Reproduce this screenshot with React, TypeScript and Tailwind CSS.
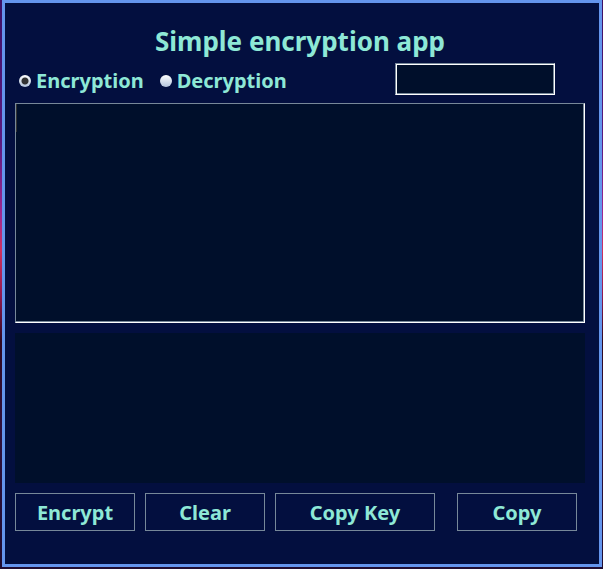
import { useState } from "react";

type Mode = "encrypt" | "decrypt";

const radioClass =
  "h-3 w-3 shrink-0 appearance-none rounded-full bg-linear-to-b from-white to-[#b4c4dc] checked:bg-[radial-gradient(circle,#333333_0,#333333_3px,transparent_4px),linear-gradient(#ffffff,#b4c4dc)]";

const labelClass = "flex items-center gap-[5px] pt-1 text-xl leading-6 font-bold";

const buttonClass =
  "h-[38px] border border-[#778899] pt-[2px] text-center text-xl leading-6 font-bold";

export default function App() {
  const [mode, setMode] = useState<Mode>("encrypt");
  const [key, setKey] = useState("");
  const [text, setText] = useState("");

  return (
    <div className="bg-[linear-gradient(#3d1064_0%,#5a1a80_25%,#a02890_38%,#d03060_44%,#901850_52%,#300820_60%,#30103c_75%,#200c30_100%)] pr-px pb-[2px] pl-[2px] font-['Noto_Sans','Open_Sans',sans-serif] text-[#8ee8d6]">
      <main className="flex flex-col border-3 border-[#6495ed] bg-[#030f3f] pt-5 pr-[14px] pb-[33px] pl-[10px]">
        <h1 className="text-center text-[26px] leading-9 font-bold">
          Simple encryption app
        </h1>

        <div className="mt-1 flex h-8 items-center gap-4 pr-[30px] pl-1">
          <label className={labelClass}>
            <input
              type="radio"
              name="mode"
              className={radioClass}
              checked={mode === "encrypt"}
              onChange={() => setMode("encrypt")}
            />
            Encryption
          </label>
          <label className={labelClass}>
            <input
              type="radio"
              name="mode"
              className={radioClass}
              checked={mode === "decrypt"}
              onChange={() => setMode("decrypt")}
            />
            Decryption
          </label>
          <input
            type="text"
            aria-label="Key"
            value={key}
            onChange={(e) => setKey(e.target.value)}
            className="ml-auto h-8 w-40 border border-t-[#778899] border-r-white border-b-white border-l-[#778899] bg-[#000f2b] px-1 text-xl shadow-[inset_1px_1px_0_#ffffff,inset_-1px_-1px_0_#778899] outline-none"
          />
        </div>

        <div className="relative mt-2 flex">
          <textarea
            aria-label="Text"
            value={text}
            onChange={(e) => setText(e.target.value)}
            className="h-[220px] w-full resize-none border border-t-[#778899] border-r-white border-b-white border-l-[#778899] bg-[#000f2b] px-1 text-xl shadow-[inset_-1px_-1px_0_#778899] outline-none"
          />
          <span className="absolute top-px left-px h-7 w-px bg-[#333333]" />
        </div>

        <output className="mt-[10px] block h-[150px] bg-[#000f2b]" />

        <div className="mt-[10px] flex gap-[10px] pr-2">
          <button type="button" className={`${buttonClass} w-[120px]`}>
            Encrypt
          </button>
          <button type="button" className={`${buttonClass} w-[120px]`}>
            Clear
          </button>
          <button type="button" className={`${buttonClass} w-[160px]`}>
            Copy Key
          </button>
          <button type="button" className={`${buttonClass} ml-auto w-[120px]`}>
            Copy
          </button>
        </div>
      </main>
    </div>
  );
}
